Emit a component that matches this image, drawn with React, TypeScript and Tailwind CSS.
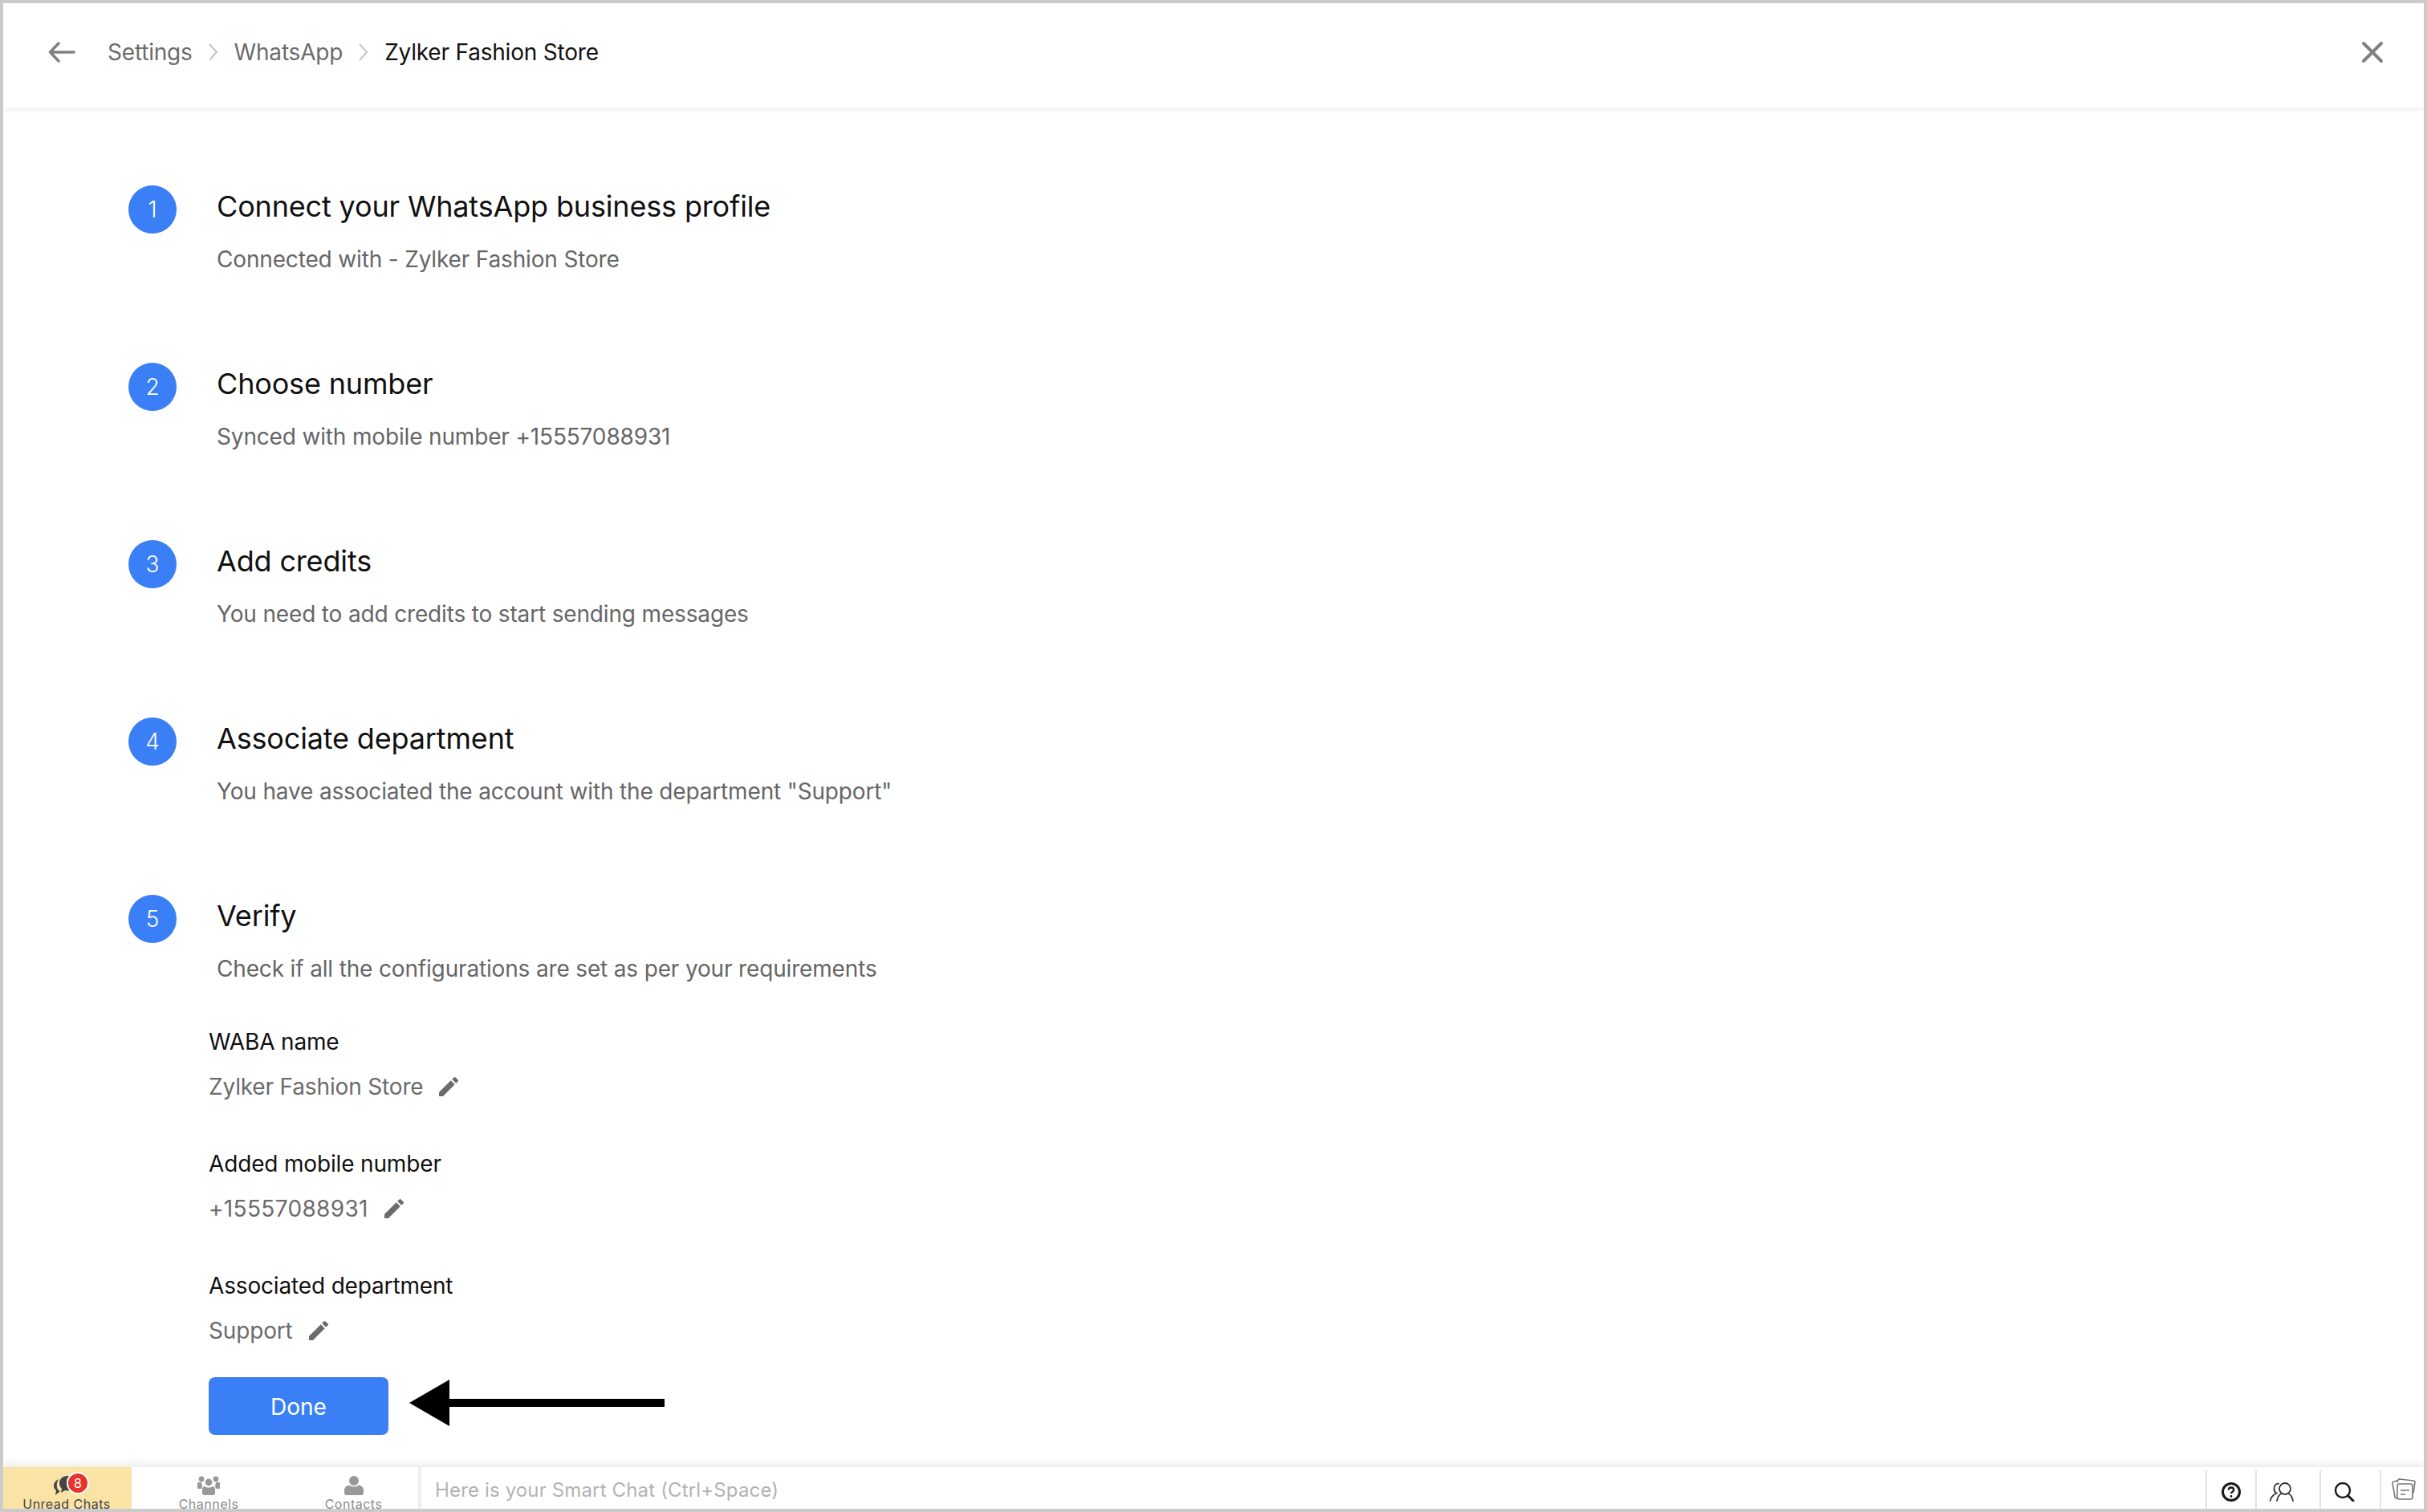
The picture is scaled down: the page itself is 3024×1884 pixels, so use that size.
import { MdEdit } from "react-icons/md";

const font = "font-['Inter','Liberation_Sans',sans-serif]";

const steps = [
  { title: "Connect your WhatsApp business profile", text: "Connected with - Zylker Fashion Store" },
  { title: "Choose number", text: "Synced with mobile number +15557088931" },
  { title: "Add credits", text: "You need to add credits to start sending messages" },
  { title: "Associate department", text: 'You have associated the account with the department "Support"' },
  { title: "Verify", text: "Check if all the configurations are set as per your requirements" },
];

const fields = [
  { label: "WABA name", value: "Zylker Fashion Store", spacing: "tracking-[-0.16px]" },
  { label: "Added mobile number", value: "+15557088931", spacing: "tracking-[0.34px]" },
  { label: "Associated department", value: "Support", spacing: "tracking-[-0.16px]" },
];

function Chevron() {
  return (
    <svg width="12" height="24" viewBox="0 0 12 24" fill="none" stroke="#c4c4c4" strokeWidth="2">
      <path d="M1 2l9 10-9 10" />
    </svg>
  );
}

function Step({ n, title, text }: { n: number; title: string; text: string }) {
  return (
    <div className="flex items-start">
      <div className="flex h-[60px] w-[60px] shrink-0 items-center justify-center rounded-full bg-[#3a7ff6] text-[28px] font-light text-white">
        {n}
      </div>
      <div className="ml-[50px]">
        <div className="h-[60px] text-[36px] leading-[52px] tracking-[-0.16px] text-[#111]">{title}</div>
        <div className="mt-[12px] text-[28px] leading-[40px] tracking-[-0.16px] text-[#666]">{text}</div>
      </div>
    </div>
  );
}

function TabLabel({ children, color }: { children: string; color: string }) {
  return <div className={`h-[20px] shrink-0 text-[16px] leading-[20px] tracking-[0.5px] whitespace-nowrap ${color}`}>{children}</div>;
}

export default function App() {
  return (
    <div className={`flex h-[1884px] w-[3024px] flex-col overflow-hidden border-4 border-[#cbcbcb] bg-white ${font}`}>
      <header className="flex h-[130px] shrink-0 items-center bg-white pb-[8px] pl-[56px] pr-[50px] text-[28px] tracking-[-0.2px] shadow-[0_2px_8px_rgba(0,0,0,0.07)]">
        <svg width="34" height="26" viewBox="0 0 34 26" fill="none" stroke="#808080" strokeWidth="3.5" strokeLinecap="round" strokeLinejoin="round">
          <path d="M32 13H3M13 2L2.500 13 13 24" />
        </svg>
        <span className="ml-[40px] text-[#6b6b6b]">Settings</span>
        <span className="mx-[20px]"><Chevron /></span>
        <span className="text-[#6b6b6b]">WhatsApp</span>
        <span className="mx-[20px]"><Chevron /></span>
        <span className="text-[#111]">Zylker Fashion Store</span>
        <svg className="ml-auto" width="28" height="28" viewBox="0 0 28 28" fill="none" stroke="#808080" strokeWidth="4" strokeLinecap="round">
          <path d="M3 3l22 22M25 3L3 25" />
        </svg>
      </header>

      <main className="flex min-h-0 flex-1 flex-col pl-[156px] pt-[97px]">
        <div className="flex flex-col gap-[109px]">
          {steps.map((s, i) => (
            <Step key={s.title} n={i + 1} title={s.title} text={s.text} />
          ))}
        </div>

        <div className="ml-[100px] mt-[51px] flex flex-col gap-[56px]">
          {fields.map((f) => (
            <div key={f.label}>
              <div className="text-[28px] leading-[40px] tracking-[-0.16px] text-[#111]">{f.label}</div>
              <div className={`mt-[16px] flex h-[40px] items-center text-[28px] text-[#6b6b6b] ${f.spacing}`}>
                {f.value}
                <MdEdit className="ml-[16px] text-[#6b6b6b]" size={32} />
              </div>
            </div>
          ))}
        </div>

        <div className="ml-[100px] mt-[38px] flex items-start">
          <button type="button" className="h-[72px] w-[224px] rounded-[8px] bg-[#3a7ff6] pt-[2px] text-[28px] text-white">
            Done
          </button>
          <svg className="ml-[26px] mt-[3px]" width="318" height="58" viewBox="0 0 318 58" fill="#000">
            <path d="M0 29L50 0V24H318V34H50V58Z" />
          </svg>
        </div>
      </main>

      <footer className="relative flex h-[52px] shrink-0 bg-white shadow-[0_-4px_10px_rgba(0,0,0,0.08)]">
        <div className="flex w-[160px] flex-col items-center overflow-hidden bg-[#fae3a5] pr-[2px]">
          <div className="relative ml-[12px] mt-[6px] h-[29px] w-[44px] shrink-0">
            <svg className="absolute left-0 top-[5px]" width="26" height="24" viewBox="0 0 26 24" fill="#444">
              <path d="M26 0h-9C11 0 7 4 7 9c0 3 1 5 3 7l-1 5 5-3c4 1 9 0 12-2z" />
              <path d="M6 4C2 6 0 9 0 12c0 3 1 5 3 6l-1 6 6-5-2-1C3 15 3 9 6 4z" />
            </svg>
            <div className="absolute left-[16px] top-0 flex h-[28px] w-[28px] items-center justify-center rounded-full border-2 border-white bg-[#e8332a] text-[16px] leading-none text-white">
              8
            </div>
          </div>
          <div className="mt-[1px] shrink-0"><TabLabel color="text-[#444]">Unread Chats</TabLabel></div>
        </div>

        <div className="flex w-[361px] overflow-hidden border-r-4 border-[#eeeeee]">
          <div className="flex w-[192px] flex-col items-center pt-[11px]">
            <svg className="shrink-0" width="28" height="24" viewBox="0 0 28 24" fill="#999">
              <circle cx="5" cy="4" r="3.400" />
              <circle cx="23" cy="4" r="3.400" />
              <circle cx="14" cy="8" r="4.400" />
              <path d="M1 8h4l1 5-1 3H1c-1 0-1-1-1-2v-4c0-1 0-2 1-2zM23 8h4c1 0 1 1 1 2v4c0 1 0 2-1 2h-4l-1-3z" />
              <path d="M9 13c2 2 8 2 10 0 2 0 3 2 3 4v4c0 2-1 3-3 3H9c-2 0-3-1-3-3v-4c0-2 1-4 3-4z" />
            </svg>
            <div className="mt-[1px] shrink-0"><TabLabel color="text-[#8a8a8a]">Channels</TabLabel></div>
          </div>
          <div className="flex flex-1 flex-col items-center pl-[4px] pt-[11px]">
            <svg className="shrink-0" width="24" height="24" viewBox="0 0 24 24" fill="#999">
              <circle cx="12" cy="6" r="6" />
              <path d="M6 11.500c3 2.500 9 2.500 12 0 4 1 6 3 6 6V21c0 2-1 3-3 3H3c-2 0-3-1-3-3v-3.500c0-3 2-5 6-6z" />
            </svg>
            <div className="mt-[1px] shrink-0"><TabLabel color="text-[#8a8a8a]">Contacts</TabLabel></div>
          </div>
        </div>

        <div className="flex min-w-0 flex-1 items-center pl-[17px] pt-[5px] text-[24px] tracking-[0.15px] text-[#b3b3b3]">
          Here is your Smart Chat (Ctrl+Space)
        </div>

        <div className="mt-[4px] flex w-[62px] shrink-0 items-center justify-center border-l-2 border-[#e2e2e2] pt-[6px]">
          <svg width="24" height="24" viewBox="0 0 24 24" fill="none" stroke="#1a1a1a" strokeWidth="3">
            <circle cx="12" cy="12" r="10.500" />
            <path d="M8.800 9.500c0-4 6.400-4 6.400 0 0 2.500-3.200 2.500-3.200 4.500" strokeWidth="2.400" />
            <circle cx="12" cy="17.500" r="0.700" strokeWidth="1.400" />
          </svg>
        </div>
        <div className="mt-[4px] flex w-[80px] shrink-0 items-center border-l-2 border-[#e2e2e2] pl-[15px] pt-[6px]">
          <svg width="32" height="24" viewBox="0 0 32 24" fill="none" stroke="#333" strokeWidth="1.800" strokeLinecap="round">
            <circle cx="20" cy="8" r="7" />
            <path d="M10 23c1-5 3-8 6-9M30 23c-1-5-3-8-6-9" />
            <path d="M12 1.500C8 1.500 6.500 5 6.500 8c0 2 1 4.500 3 5.500C6 15 3 18 1.500 23" />
          </svg>
        </div>
        <div className="mt-[4px] flex w-[75px] shrink-0 items-center border-l-2 border-[#e2e2e2] pl-[16px] pt-[6px]">
          <svg width="26" height="24" viewBox="0 0 26 24" fill="none" stroke="#1a1a1a" strokeWidth="2.400" strokeLinecap="round">
            <circle cx="11" cy="10" r="9" />
            <path d="M17.500 16.500l6.500 6.500" strokeWidth="3" />
          </svg>
        </div>
        <div className="mt-[4px] flex w-[55px] shrink-0 items-start border-l-2 border-[#e2e2e2] pl-[13px] pt-[10px]">
          <svg width="30" height="28" viewBox="0 0 30 28" fill="none" stroke="#777" strokeWidth="1.600" strokeLinejoin="round">
            <path d="M7 3L3 4c-1 0-2 1-2 2l3 17c0 1 1 2 2 2h2" />
            <path d="M7 5l1-3c0-1 1-1 2-1l17 2c1 0 2 1 2 2l-2 14" />
            <rect x="7" y="7" width="19" height="19" rx="2.500" fill="#fff" />
            <path d="M11 15h11M11 20h6" />
          </svg>
        </div>
      </footer>
    </div>
  );
}
